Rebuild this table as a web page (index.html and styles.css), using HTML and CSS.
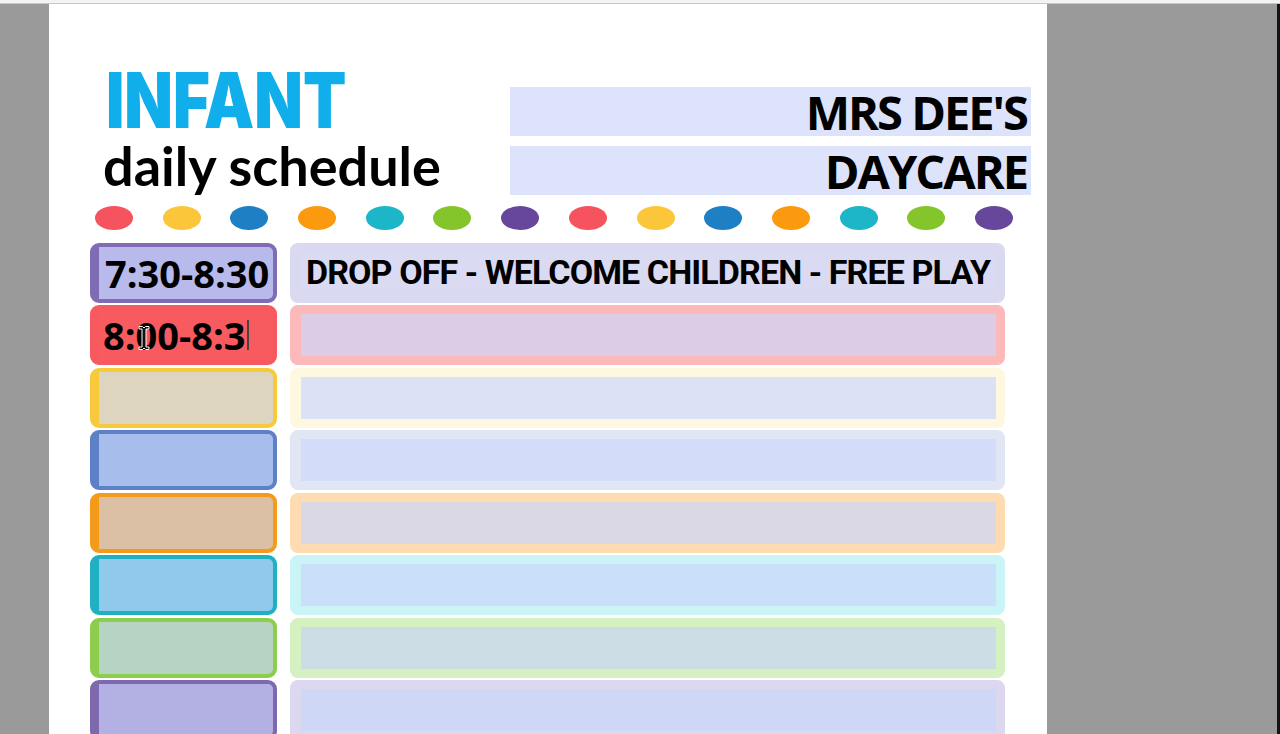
FILE: index.html
```html
<!DOCTYPE html>
<html>
<head>
<meta charset="utf-8">
<link rel="stylesheet" href="styles.css">
</head>
<body>
<div class="topbar"></div>
<div class="viewport">
  <div class="page">
    <div class="header">
      <div class="title">
        <div class="infant"><span>INFANT</span></div>
        <div class="daily">daily schedule</div>
      </div>
      <div class="names">
        <div class="namebox">MRS DEE'S</div>
        <div class="namebox">DAYCARE</div>
      </div>
    </div>
    <div class="dots">
      <span class="dot c-red"></span><span class="dot c-yellow"></span><span class="dot c-blue"></span><span class="dot c-orange"></span><span class="dot c-teal"></span><span class="dot c-green"></span><span class="dot c-purple"></span>
      <span class="dot c-red"></span><span class="dot c-yellow"></span><span class="dot c-blue"></span><span class="dot c-orange"></span><span class="dot c-teal"></span><span class="dot c-green"></span><span class="dot c-purple"></span>
    </div>
    <div class="rows">
      <div class="time t1">7:30-8:30</div>
      <div class="act a1">DROP OFF - WELCOME CHILDREN - FREE PLAY</div>

      <div class="time t2">8:00-8:3<span class="caret"></span>
        <svg class="ibeam" width="14" height="26" viewBox="0 0 14 26"><path d="M2 1.5h3.5l1.5 1.5 1.5-1.5H12v2.5H9v18h3v2.5H8.5L7 23l-1.5 1.5H2V22h3V4H2z" fill="#111" stroke="#fff" stroke-width="1"/></svg>
      </div>
      <div class="act a2"></div>

      <div class="time t3"></div>
      <div class="act a3"></div>

      <div class="time t4"></div>
      <div class="act a4"></div>

      <div class="time t5"></div>
      <div class="act a5"></div>

      <div class="time t6"></div>
      <div class="act a6"></div>

      <div class="time t7"></div>
      <div class="act a7"></div>

      <div class="time t8"></div>
      <div class="act a8"></div>
    </div>
  </div>
  <div class="edge"></div>
</div>
</body>
</html>
```

FILE: styles.css
```css
* { box-sizing: border-box; }
html, body { margin: 0; padding: 0; }
body {
  width: 1280px;
  height: 734px;
  overflow: hidden;
  background: #9a9a9a;
  font-family: "Open Sans", "Liberation Sans", sans-serif;
}
.topbar {
  height: 4px;
  background: #f3f3f3;
  border-bottom: 1px solid #c6c6c6;
}
.viewport {
  display: flex;
  height: 730px;
}
.page {
  margin-left: 49px;
  width: 998px;
  height: 730px;
  background: #fff;
  overflow: hidden;
}
.edge {
  margin-left: auto;
  width: 3px;
  background: #141414;
}
.header {
  height: 202px;
  display: flex;
  justify-content: space-between;
  padding: 0 16px 0 54px;
}
.title { padding-top: 67px; }
.infant {
  height: 58px;
  line-height: 58px;
  font-family: "Inter", "Lato", sans-serif;
  font-weight: 900;
  font-size: 77px;
  color: #10aeea;
  white-space: nowrap;
}
.infant span {
  display: inline-block;
  transform: scaleX(0.82);
  transform-origin: left center;
  margin-left: 3px;
}
.daily {
  margin-top: 10px;
  height: 54px;
  line-height: 54px;
  font-family: "Lato", sans-serif;
  font-weight: 700;
  font-size: 54px;
  color: #000;
  white-space: nowrap;
  letter-spacing: 0;
}
.names {
  padding-top: 83px;
  width: 521px;
  display: flex;
  flex-direction: column;
  gap: 10px;
}
.namebox {
  height: 49px;
  background: #dce3fb;
  text-align: right;
  padding-right: 4px;
  font-weight: 700;
  font-size: 47px;
  line-height: 50px;
  letter-spacing: -2px;
  color: #000;
}
.dots {
  height: 24px;
  display: flex;
  justify-content: space-between;
  padding: 0 34px 0 46px;
}
.dot {
  width: 38px;
  height: 24px;
  border-radius: 50%;
}
.c-red { background: #f5535e; }
.c-yellow { background: #fcc63b; }
.c-blue { background: #1e7fc4; }
.c-orange { background: #fb9a0e; }
.c-teal { background: #1db5c8; }
.c-green { background: #84c52b; }
.c-purple { background: #67479c; }

.rows {
  margin-top: 13px;
  margin-left: 41px;
  display: grid;
  grid-template-columns: 187px 715px;
  column-gap: 13px;
  grid-auto-rows: 60px;
  row-gap: 2.43px;
}
.time {
  position: relative;
  border: 4px solid;
  border-left-width: 9px;
  border-radius: 9px;
  display: flex;
  align-items: center;
  padding-left: 6px;
  font-weight: 700;
  font-size: 38px;
  letter-spacing: 0;
  color: #000;
  white-space: nowrap;
  overflow: hidden;
}
.t1 { border-color: #7f6cb5; background: #b8baeb; }
.t2 { border-color: #f65a5e; background: #f75b5f; padding-left: 4px; }
.t3 { border-color: #f9c93c; background: #ddd5bf; }
.t4 { border-color: #5d80c6; background: #a7bdec; }
.t5 { border-color: #f59b1c; background: #dbc0a6; }
.t6 { border-color: #20b0c2; background: #8fcaec; }
.t7 { border-color: #8dcc4d; background: #b6d4c3; }
.t8 { border-color: #7e69af; background: #b3b0e4; }

.caret {
  display: inline-block;
  width: 2px;
  height: 30px;
  margin-left: 1px;
  background: #444;
}
.ibeam {
  position: absolute;
  left: 38px;
  top: 16px;
}

.act {
  border: 9px solid;
  border-left-width: 11px;
  border-radius: 8px;
  display: flex;
  align-items: center;
  padding-left: 5px;
  padding-bottom: 3px;
  font-family: "Roboto", "Open Sans", sans-serif;
  font-weight: 700;
  font-size: 34px;
  letter-spacing: -0.9px;
  color: #000;
  white-space: nowrap;
  overflow: hidden;
}
.a1 { border-color: #d9d9f1; background: #dadbf3; }
.a2 { border-color: #fdb8b9; background: #dccce6; }
.a3 { border-color: #fef8e1; background: #dbe2f5; }
.a4 { border-color: #e0e6f3; background: #d3ddf9; }
.a5 { border-color: #fedbb0; background: #dbd8e5; }
.a6 { border-color: #cbf4f7; background: #c9dffa; }
.a7 { border-color: #d6f1c1; background: #cddde6; }
.a8 { border-color: #dcd8ef; background: #cfd7f6; }
```
